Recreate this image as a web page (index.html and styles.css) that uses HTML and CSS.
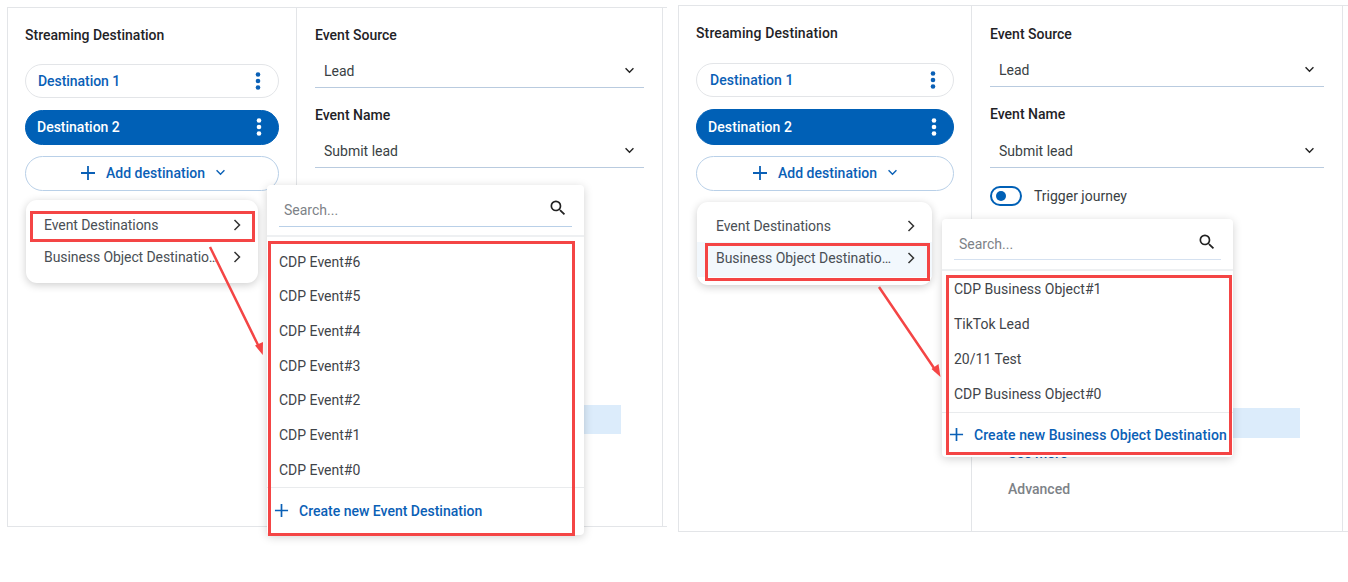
FILE: index.html
```html
<!DOCTYPE html>
<html>
<head>
    <title>Streaming Destination</title>
    <link rel="stylesheet" href="styles.css">
</head>
<body>
    <svg class="defs" width="0" height="0">
        <symbol id="plus" viewBox="0 0 16 16"><path d="M8 1v14M1 8h14" fill="none" stroke="currentColor" stroke-width="1.8"/></symbol>
        <symbol id="down" viewBox="0 0 12 8"><path d="M1.5 1.5 6 6l4.500-4.500" fill="none" stroke="currentColor" stroke-width="1.6"/></symbol>
        <symbol id="right" viewBox="0 0 8 12"><path d="M1.500 1 6.500 6l-5 5" fill="none" stroke="currentColor" stroke-width="1.500"/></symbol>
        <symbol id="dots" viewBox="0 0 6 18"><circle cx="3" cy="2.500" r="2.300"/><circle cx="3" cy="9" r="2.300"/><circle cx="3" cy="15.500" r="2.300"/></symbol>
        <symbol id="search" viewBox="0 0 24 24"><path d="M15.500 14h-.79l-.28-.27A6.471 6.471 0 0 0 16 9.500 6.500 6.500 0 1 0 9.500 16c1.610 0 3.090-.59 4.230-1.570l.27.28v.79l5 4.990L20.490 19l-4.990-5zm-6 0C7.010 14 5 11.990 5 9.500S7.010 5 9.500 5 14 7.010 14 9.500 11.990 14 9.500 14z"/></symbol>
    </svg>

    <div class="canvas">
        <!-- first screenshot -->
        <section class="shot shot-a">
            <div class="col-dest">
                <h2 class="title">Streaming Destination</h2>
                <div class="pill pill-first">Destination 1<svg class="dots"><use href="#dots"/></svg></div>
                <div class="pill pill-active">Destination 2<svg class="dots"><use href="#dots"/></svg></div>
                <div class="pill pill-add">
                    <svg class="plus"><use href="#plus"/></svg>
                    Add destination
                    <svg class="down"><use href="#down"/></svg>
                </div>
            </div>
            <div class="col-form">
                <div class="label">Event Source</div>
                <div class="select">Lead<svg class="down"><use href="#down"/></svg></div>
                <div class="label label-next">Event Name</div>
                <div class="select">Submit lead<svg class="down"><use href="#down"/></svg></div>
                <div class="blue-row"></div>
            </div>
            <div class="col-rest"></div>
        </section>

        <!-- second screenshot -->
        <section class="shot shot-b">
            <div class="col-dest">
                <h2 class="title">Streaming Destination</h2>
                <div class="pill pill-first">Destination 1<svg class="dots"><use href="#dots"/></svg></div>
                <div class="pill pill-active">Destination 2<svg class="dots"><use href="#dots"/></svg></div>
                <div class="pill pill-add">
                    <svg class="plus"><use href="#plus"/></svg>
                    Add destination
                    <svg class="down"><use href="#down"/></svg>
                </div>
            </div>
            <div class="col-form">
                <div class="label">Event Source</div>
                <div class="select">Lead<svg class="down"><use href="#down"/></svg></div>
                <div class="label label-next">Event Name</div>
                <div class="select select-tall">Submit lead<svg class="down"><use href="#down"/></svg></div>
                <div class="trigger"><span class="toggle"><span class="knob"></span></span>Trigger journey</div>
                <div class="blue-row"></div>
                <div class="see-more">See more</div>
                <div class="advanced">Advanced</div>
            </div>
            <div class="col-rest"></div>
        </section>

        <!-- menus on top of the panels -->
        <div class="menu menu-a">
            <div class="menu-item"><span class="menu-text">Event Destinations</span><svg class="right"><use href="#right"/></svg></div>
            <div class="menu-item"><span class="menu-text">Business Object Destinations</span><svg class="right"><use href="#right"/></svg></div>
        </div>
        <div class="menu menu-b">
            <div class="menu-item"><span class="menu-text">Event Destinations</span><svg class="right"><use href="#right"/></svg></div>
            <div class="menu-item menu-item-hover"><span class="menu-text">Business Object Destinations</span><svg class="right"><use href="#right"/></svg></div>
        </div>

        <div class="pop pop-a">
            <div class="pop-search"><div class="search-box"><span>Search...</span><svg class="search"><use href="#search"/></svg></div></div>
            <ul class="pop-list">
                <li>CDP Event#6</li>
                <li>CDP Event#5</li>
                <li>CDP Event#4</li>
                <li>CDP Event#3</li>
                <li>CDP Event#2</li>
                <li>CDP Event#1</li>
                <li>CDP Event#0</li>
            </ul>
            <div class="pop-foot"><svg class="plus"><use href="#plus"/></svg>Create new Event Destination</div>
        </div>
        <div class="pop pop-b">
            <div class="pop-search"><div class="search-box"><span>Search...</span><svg class="search"><use href="#search"/></svg></div></div>
            <ul class="pop-list">
                <li>CDP Business Object#1</li>
                <li>TikTok Lead</li>
                <li>20/11 Test</li>
                <li>CDP Business Object#0</li>
            </ul>
            <div class="pop-foot"><svg class="plus"><use href="#plus"/></svg>Create new Business Object Destination</div>
        </div>

        <!-- red annotations -->
        <div class="mark mark-1"></div>
        <div class="mark mark-2"></div>
        <div class="mark mark-3"></div>
        <div class="mark mark-4"></div>
        <svg class="arrows" width="1348" height="582">
            <path d="M210 247 259.500 348M879 287 936 371" fill="none" stroke="#f44545" stroke-width="2.500"/>
            <path d="M262.800 355 255 345.500 263 342zM940.500 377 931.500 369 938.500 364z" fill="#f44545"/>
        </svg>
    </div>
</body>
</html>
```

FILE: styles.css
```css
* {
    box-sizing: border-box;
}

body {
    margin: 0;
    background: #fff;
    font-family: Roboto, "Liberation Sans", sans-serif;
    font-size: 14px;
    color: #333;
}

.defs {
    position: absolute;
}

svg {
    fill: currentColor;
}

.canvas {
    position: relative;
    display: flex;
    align-items: flex-start;
    width: 1348px;
    height: 582px;
    overflow: hidden;
}

/* panels */
.shot {
    display: flex;
    border: 1px solid #e3e5e8;
    border-right: 0;
}

.shot-a {
    width: 660px;
    height: 520px;
    margin: 7px 0 0 7px;
}

.shot-b {
    width: 670px;
    height: 527px;
    margin: 5px 0 0 11px;
}

.col-dest {
    flex: none;
    padding: 18px 17px 0;
    border-right: 1px solid #e3e5e8;
}

.shot-a .col-dest {
    width: 289px;
}

.shot-b .col-dest {
    width: 293px;
}

.col-form {
    flex: none;
    padding: 18px 18px 0;
    border-right: 1px solid #e3e5e8;
}

.shot-a .col-form {
    width: 366px;
}

.shot-b .col-form {
    width: 371px;
    padding-top: 19px;
}

.title {
    margin: 0;
    font-size: 14px;
    line-height: 18px;
    font-weight: 500;
    color: #1f2327;
}

.shot-b .title {
    letter-spacing: 0.12px;
}

/* destination pills */
.pill {
    display: flex;
    align-items: center;
    justify-content: space-between;
    height: 34px;
    margin-top: 12px;
    padding: 0 13px;
    border: 1px solid #e3e5e8;
    border-radius: 18px;
    font-weight: 500;
    color: #0a60b6;
}

.shot-a .pill-first {
    margin-top: 20px;
    padding-left: 12px;
    letter-spacing: -0.05px;
}

.shot-b .pill-first {
    margin-top: 21px;
    letter-spacing: 0.05px;
}

.pill-active {
    height: 35px;
    padding-left: 11px;
    padding-bottom: 1px;
    padding-right: 12px;
    border-color: #0060b6;
    background: #0060b6;
    color: #fff;
}

.shot-b .pill-active {
    height: 36px;
    letter-spacing: 0.1px;
}

.pill-add {
    justify-content: center;
    gap: 10px;
    height: 35px;
    margin-top: 11px;
    padding-bottom: 2px;
    border-color: #b9d0e8;
    letter-spacing: 0.03px;
}

.shot-a .pill-add {
    padding-left: 15px;
}

.dots {
    width: 6px;
    height: 18px;
    margin-right: 4px;
}

.plus {
    flex: none;
    width: 15px;
    height: 15px;
    color: #0a60b6;
}

.pill-add .plus {
    width: 16px;
    height: 16px;
}

.down {
    flex: none;
    width: 11px;
    height: 7px;
}

/* form column */
.label {
    font-weight: 500;
    line-height: 18px;
    color: #1f2327;
}

.label-next {
    margin-top: 18px;
}

.select {
    display: flex;
    align-items: center;
    justify-content: space-between;
    height: 34px;
    margin-top: 10px;
    padding: 0 9px;
    border-bottom: 1px solid #b9cbdf;
    color: #3a3f44;
}

.select .down {
    color: #222;
}

.select-tall {
    height: 35px;
    padding-top: 1px;
}

.trigger {
    display: flex;
    align-items: center;
    gap: 12px;
    height: 20px;
    margin-top: 18px;
    color: #3a3f44;
}

.toggle {
    display: block;
    width: 32px;
    height: 20px;
    border: 2.500px solid #0060b6;
    border-radius: 10px;
}

.knob {
    display: block;
    width: 10px;
    height: 10px;
    margin: 2.500px 0 0 3.500px;
    border-radius: 50%;
    background: #0060b6;
}

.blue-row {
    height: 30px;
    margin: 0 24px 0 18px;
    background: #dcecfb;
}

.shot-a .blue-row {
    height: 29px;
    margin-top: 237px;
    margin-right: 23px;
}

.shot-b .blue-row {
    margin-top: 202px;
}

.see-more {
    margin: 6px 0 0 18px;
    line-height: 18px;
    font-weight: 500;
    color: #0a60b6;
}

.advanced {
    margin: 18px 0 0 18px;
    line-height: 18px;
    font-weight: 500;
    color: #7d8287;
}

/* first menu level */
.menu {
    position: absolute;
    padding: 9px 0 10px;
    border-radius: 11px;
    background: #fff;
    box-shadow: 0 2px 8px rgba(0, 0, 0, 0.2);
}

.menu-a {
    left: 26px;
    top: 200px;
    width: 232px;
    letter-spacing: -0.08px;
}

.menu-b {
    left: 697px;
    top: 202px;
    width: 235px;
    padding: 8px 0 0;
    height: 83px;
}

.menu-item {
    display: flex;
    align-items: center;
    justify-content: space-between;
    height: 32px;
    padding: 0 17px 0 18px;
    color: #4a4f55;
}

.menu-b .menu-item {
    padding-left: 19px;
}

.menu-item-hover {
    height: 35px;
    padding-bottom: 3px;
    background: #f2f8fd;
}

.menu-text {
    width: 176px;
    overflow: hidden;
    white-space: nowrap;
    text-overflow: ellipsis;
}

.menu-b .menu-text {
    width: 178px;
    letter-spacing: -0.05px;
}

.right {
    flex: none;
    width: 8px;
    height: 12px;
    color: #333;
}

/* second menu level */
.pop {
    position: absolute;
    background: #fff;
    border-radius: 4px;
    box-shadow: 0 2px 10px rgba(0, 0, 0, 0.18);
}

.pop-a {
    left: 267px;
    top: 185px;
    width: 317px;
    height: 350px;
}

.pop-b {
    left: 942px;
    top: 219px;
    width: 291px;
    height: 238px;
}

.pop-search {
    height: 52px;
    padding: 0 12px;
    border-bottom: 2px solid #eef0f2;
}

.search-box {
    display: flex;
    align-items: center;
    justify-content: space-between;
    height: 42px;
    padding: 8px 4px 0 5px;
    border-bottom: 1px solid #b9d0e8;
    color: #7d8287;
}

.pop-b .search-box {
    height: 41px;
    padding-top: 10px;
    border-bottom-color: #d5e1f0;
}

.search {
    width: 20px;
    height: 20px;
    margin-top: -3px;
    color: #222;
}

.pop-b .search {
    margin-top: -5px;
}

.pop-list {
    margin: 0;
    padding: 7.600px 0 0;
    list-style: none;
}

.pop-b .pop-list {
    padding-top: 1px;
}

.pop-list li {
    height: 34.700px;
    padding-left: 12px;
    line-height: 34.700px;
    color: #3f4449;
}

.pop-b .pop-list li {
    height: 35px;
    line-height: 35px;
}

.pop-foot {
    display: flex;
    align-items: center;
    height: 46px;
    padding-left: 7px;
    border-top: 1px solid #e9ebed;
    font-weight: 500;
    color: #0a60b6;
}

.pop-b .pop-foot {
    height: 44px;
    letter-spacing: 0.08px;
}

.pop-foot .plus {
    margin-right: 10px;
}

/* annotations */
.mark {
    position: absolute;
    border: 3px solid #f44545;
}

.mark-1 {
    left: 30px;
    top: 211px;
    width: 225px;
    height: 31px;
}

.mark-2 {
    left: 268px;
    top: 241px;
    width: 307px;
    height: 295px;
}

.mark-3 {
    left: 705px;
    top: 243px;
    width: 225px;
    height: 38px;
}

.mark-4 {
    left: 946px;
    top: 275px;
    width: 286px;
    height: 180px;
}

.arrows {
    position: absolute;
    left: 0;
    top: 0;
    fill: none;
}
```
